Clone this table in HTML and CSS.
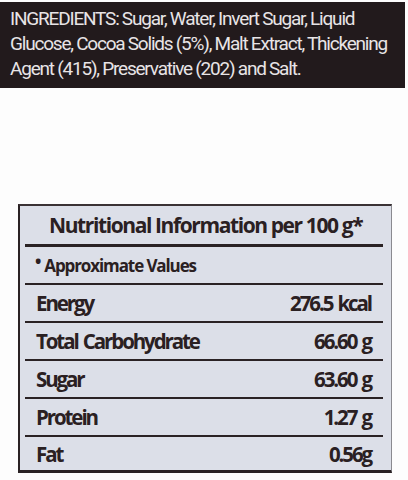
FILE: index.html
```html
<!DOCTYPE html>
<html>
<head>
<meta charset="utf-8">
<link rel="stylesheet" href="styles.css">
</head>
<body>
<div class="page">
  <section class="ingredients">
    <p class="line">INGREDIENTS: Sugar, Water, Invert Sugar, Liquid</p>
    <p class="line">Glucose, Cocoa Solids (5%), Malt Extract, Thickening</p>
    <p class="line">Agent (415), Preservative (202) and Salt.</p>
  </section>
  <section class="panel">
    <div class="row title">Nutritional Information per 100 g*</div>
    <div class="row note"><span class="dot">•</span>Approximate Values</div>
    <div class="row"><span>Energy</span><span>276.5 kcal</span></div>
    <div class="row"><span>Total Carbohydrate</span><span>66.60 g</span></div>
    <div class="row"><span>Sugar</span><span>63.60 g</span></div>
    <div class="row"><span>Protein</span><span>1.27 g</span></div>
    <div class="row last"><span>Fat</span><span>0.56g</span></div>
  </section>
</div>
</body>
</html>
```

FILE: styles.css
```css
html, body {
  margin: 0;
  padding: 0;
  background: #fdfdfd;
}
.page {
  width: 408px;
  height: 480px;
  display: flex;
  flex-direction: column;
}
.ingredients {
  margin-top: 2px;
  width: 405px;
  height: 86px;
  box-sizing: border-box;
  background: #221a1c;
  padding: 4px 0 0 10px;
  color: #e8e4e6;
  font-family: Roboto, "Liberation Sans", sans-serif;
  font-size: 19px;
  letter-spacing: -1.2px;
  word-spacing: -0.2px;
}
.line {
  margin: 0;
  line-height: 25px;
  white-space: nowrap;
}
.panel {
  margin: 116px 0 0 18px;
  width: 374px;
  height: 269px;
  box-sizing: border-box;
  background: #dcdfe8;
  border-top: 2px solid #3a3234;
  border-left: 2px solid #2a2224;
  border-right: 1px solid #8a8a90;
  border-bottom: 3px solid #2a2224;
  padding: 0 8px 0 5px;
  display: flex;
  flex-direction: column;
  color: #2a2022;
  font-family: "Open Sans", sans-serif;
  font-weight: 700;
}
.row {
  display: flex;
  justify-content: space-between;
  align-items: center;
  height: 36px;
  border-bottom: 2px solid #2a2224;
  padding: 0 12px 0 11px;
  font-size: 20.5px;
  letter-spacing: -2.1px;
  word-spacing: 2px;
}
.title {
  height: 38px;
  border-bottom-width: 3px;
  justify-content: flex-start;
  padding-left: 24px;
  font-size: 21px;
  letter-spacing: -1.4px;
  word-spacing: 0;
}
.note {
  height: 36px;
  justify-content: flex-start;
  font-size: 17px;
  letter-spacing: -1.1px;
  word-spacing: 0;
  padding-left: 10px;
}
.dot {
  margin-right: 4px;
  position: relative;
  top: -4px;
}
.last {
  border-bottom: none;
  flex: 1;
}
```
